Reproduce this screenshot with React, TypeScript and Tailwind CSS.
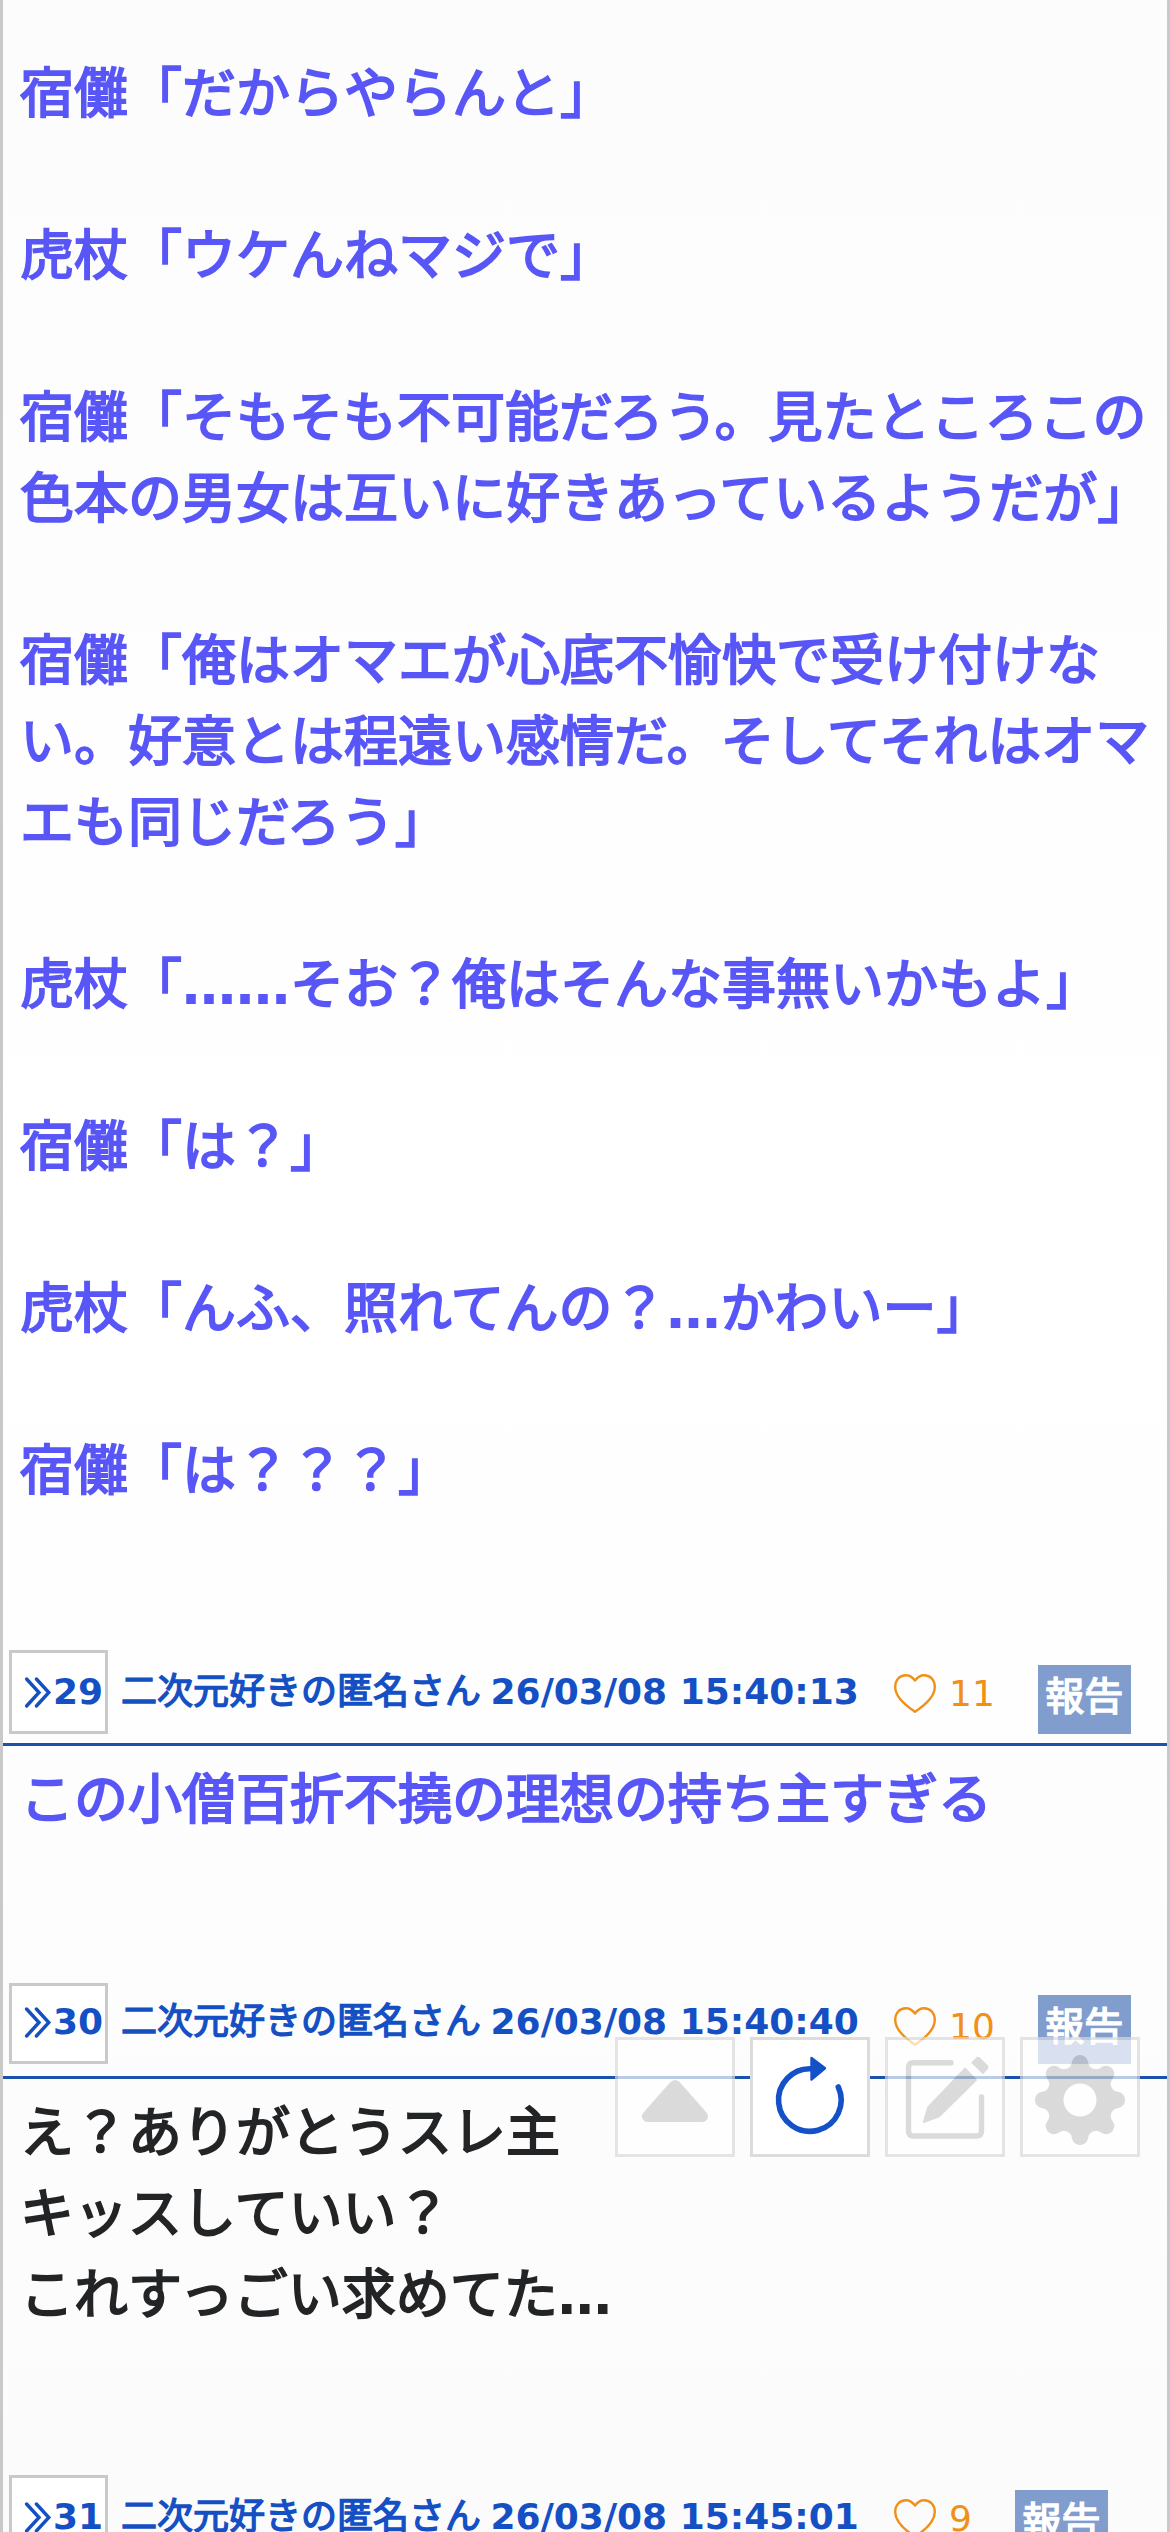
import React from 'react';

type Post = {
  no: number;
  time: string;
  likes: number;
  compact?: boolean;
  headerClass: string;
  bodyClass: string;
  lines: string[];
};

const story = [
  ['宿儺「だからやらんと」'],
  ['虎杖「ウケんねマジで」'],
  ['宿儺「そもそも不可能だろう。見たところこの', '色本の男女は互いに好きあっているようだが」'],
  ['宿儺「俺はオマエが心底不愉快で受け付けな', 'い。好意とは程遠い感情だ。そしてそれはオマ', 'エも同じだろう」'],
  ['虎杖「……そお？俺はそんな事無いかもよ」'],
  ['宿儺「は？」'],
  ['虎杖「んふ、照れてんの？…かわいー」'],
  ['宿儺「は？？？」'],
];

const posts: Post[] = [
  {
    no: 29,
    time: '26/03/08 15:40:13',
    likes: 11,
    headerClass: 'mt-[138px]',
    bodyClass: 'text-[#5856f6]',
    lines: ['この小僧百折不撓の理想の持ち主すぎる'],
  },
  {
    no: 30,
    time: '26/03/08 15:40:40',
    likes: 10,
    compact: true,
    headerClass: 'mt-[142px]',
    bodyClass: 'text-[#222426]',
    lines: ['え？ありがとうスレ主', 'キッスしていい？', 'これすっごい求めてた…'],
  },
  {
    no: 31,
    time: '26/03/08 15:45:01',
    likes: 9,
    headerClass: 'mt-[139px]',
    bodyClass: '',
    lines: [],
  },
];

// Ellipses come from the Latin bold face, the kana and kanji are emboldened with a stroke
function Line({ text }: { text: string }) {
  return (
    <span className="block [-webkit-text-stroke-width:1.9px]">
      {text.split(/(…+)/).map((part, i) =>
        part.startsWith('…') ? (
          <span key={i} className="font-bold [-webkit-text-stroke-width:0px]">{part}</span>
        ) : (
          part
        )
      )}
    </span>
  );
}

function Chevrons() {
  return (
    <svg className="h-[33px] w-[28px]" viewBox="0 0 28 33" fill="none" stroke="currentColor" strokeWidth="3.4" strokeLinecap="round" strokeLinejoin="miter">
      <path d="M2.6 3 L15 16.5 L2.6 30" />
      <path d="M12.4 3 L24.8 16.5 L12.4 30" />
    </svg>
  );
}

function Heart() {
  return (
    <svg className="mt-6 h-[39px] w-[42px]" viewBox="0 0 42 39" fill="none" stroke="currentColor" strokeWidth="2.4" strokeLinejoin="round">
      <path d="M21 6.5 C18 2.5 15 1.2 12 1.2 C5.5 1.2 1.2 6 1.2 13 C1.2 22 10 30.5 21 37.7 C32 30.5 40.8 22 40.8 13 C40.8 6 36.5 1.2 30 1.2 C27 1.2 24 2.5 21 6.5 Z" />
    </svg>
  );
}

function PostHeader({ post }: { post: Post }) {
  return (
    <div className={`flex h-24 items-start border-b-[3px] border-[#1b52ac] text-[36px] whitespace-nowrap text-[#1450c4] ${post.headerClass}`}>
      <div className={`ml-1.5 flex w-[99px] shrink-0 items-center border-[3px] border-[#c9c9c9] bg-white pl-3 font-bold ${post.compact ? 'h-[81px] pb-[3px]' : 'h-[84px]'}`}>
        <Chevrons />
        <span className="ml-[1px]">{post.no}</span>
      </div>
      <div className={`ml-[13px] w-[773px] shrink-0 leading-[84px] ${post.compact ? '-mt-[3px]' : ''}`}>
        <span className="[-webkit-text-stroke-width:1.4px]">二次元好きの匿名さん</span>
        <span className="-ml-[3px] font-bold"> {post.time}</span>
      </div>
      <div className="flex items-start text-[#f09019]">
        <Heart />
        <span className="ml-[13px] leading-[88px]">{post.likes}</span>
      </div>
      <div className={`ml-[43px] h-[69px] w-[93px] bg-[#809dce] text-center text-[39px] leading-[63px] text-white [-webkit-text-stroke-width:1.5px] ${post.compact ? 'mt-3' : 'mt-[15px]'}`}>
        報告
      </div>
    </div>
  );
}

// Eight round teeth joined by concave arcs, with a hole in the middle
function gearPath() {
  const at = (deg: number) => {
    const t = (deg * Math.PI) / 180;
    return `${(60 + 38.73 * Math.sin(t)).toFixed(2)} ${(63 - 38.73 * Math.cos(t)).toFixed(2)}`;
  };
  let d = `M${at(-12.13)}`;
  for (let i = 0; i < 8; i++) {
    d += ` A8.2 8.2 0 0 1 ${at(i * 45 + 12.13)} A7.94 7.94 0 0 0 ${at((i + 1) * 45 - 12.13)}`;
  }
  return `${d} Z M43.5 63a16.5 16.5 0 1 0 33 0a16.5 16.5 0 1 0 -33 0Z`;
}

function ToolButton({ active, children }: { active?: boolean; children: React.ReactNode }) {
  return (
    <button className={`relative h-[120px] w-[120px] border-[3px] bg-white ${active ? 'border-[#dcdcdc]' : 'border-[#dadada] opacity-70'}`}>
      <svg className="absolute -top-[3px] -left-[3px] h-[120px] w-[120px]" viewBox="0 0 120 120">
        {children}
      </svg>
    </button>
  );
}

function Toolbar() {
  return (
    <div className="absolute top-[2037px] left-[612px] flex gap-[15px]">
      <ToolButton>
        <path d="M55 45.5 Q60 40.5 65 45.5 L91.5 75.5 Q94.5 79.5 92 82.5 Q90.5 85 87 85 L33 85 Q29.5 85 28 82.5 Q25.5 79.5 28.5 75.5 Z" fill="#cdcdcd" />
      </ToolButton>
      <ToolButton active>
        <path d="M88.3 50 A31.3 31.3 0 1 1 62 31.8" fill="none" stroke="#1450c8" strokeWidth="5.6" strokeLinecap="round" />
        <path d="M61.5 21 L75 31.3 L61.5 42.5 Z" fill="#1450c8" stroke="#1450c8" strokeWidth="2.4" strokeLinejoin="round" />
      </ToolButton>
      <ToolButton>
        <path d="M66 25.8 H28.5 Q23.5 25.8 23.5 30.8 V94 Q23.5 99 28.5 99 H91.5 Q96.5 99 96.5 94 V60" fill="none" stroke="#cdcdcd" strokeWidth="5.4" strokeLinecap="round" />
        <path d="M80 30.3 L92.3 43 L54.6 80.3 L39 86 Q37.5 86 38 84.5 L42.4 69.7 Z" fill="#cdcdcd" />
        <path d="M86 25.7 L91 20.7 Q93 18.7 95 20.7 L102.4 28 Q104.4 30 102.6 32.4 L98 37.3 Z" fill="#cdcdcd" />
      </ToolButton>
      <ToolButton>
        <path d={gearPath()} fill="#cdcdcd" fillRule="evenodd" />
      </ToolButton>
    </div>
  );
}

export default function App() {
  return (
    <div className="relative h-[2532px] overflow-hidden border-x-[3px] border-[#c9c9c9] bg-linear-to-b from-[#fcfcfc] via-[#ffffff] to-[#fbfbfb] font-['DejaVu_Sans','Noto_Sans_CJK_JP',sans-serif]">
      <div className="flex flex-col gap-[81px] pt-[54px] pl-[17px] text-[54px] leading-[81px] whitespace-nowrap text-[#5856f6]">
        {story.map((lines, i) => (
          <p key={i}>
            {lines.map((line) => (
              <Line key={line} text={line} />
            ))}
          </p>
        ))}
      </div>
      {posts.map((post) => (
        <div key={post.no}>
          <PostHeader post={post} />
          <div className={`pt-3.5 pl-[17px] text-[54px] leading-[81px] whitespace-nowrap ${post.bodyClass}`}>
            {post.lines.map((line) => (
              <Line key={line} text={line} />
            ))}
          </div>
        </div>
      ))}
      <Toolbar />
    </div>
  );
}
